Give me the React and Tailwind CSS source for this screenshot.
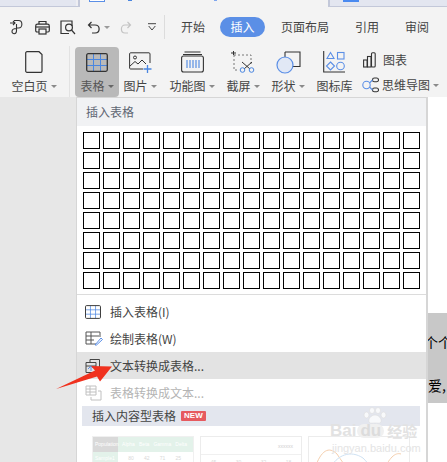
import React from "react";

const Caret = ({ c = "#8a8a8a" }) => (
  <span className="ml-[3px] inline-block h-0 w-0 border-x-[3px] border-t-[3px] border-x-transparent" style={{ borderTopColor: c }} />
);

const Big = ({ w, label, caret = true, active, children, className = "" }) => (
  <div className={`flex h-[50px] flex-col items-center rounded-[4px] pt-[3px] ${active ? "bg-[#b9b9b9]" : ""} ${className}`} style={{ width: w }}>
    <div className="flex h-[24px] items-center justify-center">{children}</div>
    <div className={`mt-[4px] flex items-center whitespace-nowrap text-[12px] leading-[16px] ${active ? "text-[#555]" : "text-[#444]"}`}>
      {label}{caret && <Caret c={active ? "#666" : "#8a8a8a"} />}
    </div>
  </div>
);

const TableIcon = ({ size = 22, h = 19 }) => (
  <svg width={size} height={h} viewBox="0 0 22 19" fill="none">
    <path d="M1 6.500H21M1 12.500H21M7.500 1V18M14.500 1V18" stroke="#4a86e0" strokeWidth="1" />
    <rect x="0.7" y="0.7" width="20.600" height="17.600" rx="1.500" stroke="#333" strokeWidth="1.300" />
  </svg>
);

const Row = ({ icon, label, hover, muted }) => (
  <div className={`flex h-[27px] items-center pl-[8px] ${hover ? "bg-[#e3e3e3]" : ""}`}>
    <div className="flex w-[25px] justify-start">{icon}</div>
    <span className={`text-[12px] leading-[16px] ${muted ? "text-[#b4b4b4]" : "text-[#444]"}`}>{label}</span>
  </div>
);

const rows = Array.from({ length: 8 });
const cols = Array.from({ length: 17 });
const latin = { fontFamily: '"Liberation Sans",sans-serif' };

export default function App() {
  return (
    <div className="relative flex h-[462px] w-[447px] flex-col overflow-hidden bg-[#f3f3f3]" style={{ fontFamily: '"Noto Sans CJK SC","Liberation Sans",sans-serif' }}>
      {/* window strip remnant */}
      <div className="flex h-[7px]">
        <div className="flex h-[7px] w-[80px] border-b border-r-2 border-[#c3c8d9] bg-[#eeeef2]">
          <div className="h-full w-[76px] bg-[#e3e6f0]" />
        </div>
        <div className="ml-[9px] h-[2px] w-[16px] border-x border-b border-[#5b8fe6] bg-white" />
        <div className="ml-[23px] h-[1px] w-[4px] bg-[#4a86e0]" />
        <div className="ml-[82px] h-[1px] w-[3px] bg-[#7fa6ee]" />
        <div className="ml-auto h-[7px] w-[119px] border-b border-l-2 border-[#c3c8d9] bg-[#e3e6f0] pl-[13px]">
          <div className="h-[2px] w-[16px] bg-[#4a8af0]" />
        </div>
      </div>

      {/* tabs row */}
      <div className="flex h-[40px] items-center pl-[10px]">
        <svg width="14" height="16" viewBox="0 0 14 16" fill="none" stroke="#333" strokeWidth="1.100">
          <path d="M0 4H5M3 2L5 4L3 6M4 1.500H8.500C13 1.500 13 9 8.500 9H6.500M6.500 5V12C6.500 15.500 2 15.500 2 12.500C2 10 5 9.500 6.500 9.500" />
        </svg>
        <svg className="ml-[11px]" width="15" height="15" viewBox="0 0 15 15" fill="none" stroke="#333" strokeWidth="1.200">
          <path d="M4 4V1.500H11V4M4 12H2C1 12 .7 11 .7 10.500V6C.7 5 1.500 4.200 2.500 4.200H12.500C13.500 4.200 14.300 5 14.300 6V10.500C14.300 11 14 12 13 12H11" />
          <rect x="4" y="9" width="7" height="5" />
          <path d="M1 7H14" />
        </svg>
        <svg className="ml-[10px]" width="16" height="15" viewBox="0 0 16 15" fill="none" stroke="#333" strokeWidth="1.200">
          <path d="M9 13.500H1V1H12V6" />
          <circle cx="9" cy="7.500" r="3.400" />
          <path d="M11.500 10L15 14" />
        </svg>
        <svg className="ml-[11px]" width="14" height="13" viewBox="0 0 14 13" fill="none" stroke="#333" strokeWidth="1.200">
          <path d="M4.500 1L1.500 4L4.500 7M1.500 4H8C13.500 4 13.500 12 8 12H5" />
        </svg>
        <Caret c="#9a9a9a" />
        <svg className="ml-[10px]" width="12" height="13" viewBox="0 0 12 13" fill="none" stroke="#c4c4c4" strokeWidth="1.200">
          <path d="M7.500 1L10.500 4L7.500 7M10.500 4H5C.2 4 .2 12 5 12H8" />
        </svg>
        <svg className="ml-[16px]" width="8" height="8" viewBox="0 0 8 8" fill="none" stroke="#444" strokeWidth="1">
          <path d="M0 .7H8M.7 3L4 7L7.300 3" />
        </svg>
        <div className="ml-[8px] h-[24px] w-px bg-[#dcdcdc]" />
        <div className="flex items-center text-[12px] leading-[18px] text-[#444]">
          <span className="ml-[16px]">开始</span>
          <span className="ml-[15px] flex h-[20px] w-[45px] items-center justify-center rounded-full bg-[#5b8fe6] text-white">插入</span>
          <span className="ml-[16px]">页面布局</span>
          <span className="ml-[26px]">引用</span>
          <span className="ml-[26px]">审阅</span>
        </div>
      </div>

      {/* ribbon */}
      <div className="flex h-[50px] items-start pl-[9px]">
        <Big w={50} label="空白页">
          <svg width="18" height="22" viewBox="0 0 18 22" fill="none" stroke="#333" strokeWidth="1.200"><path d="M2 .7H14L17 3.500V20C17 20.700 16.500 21.300 16 21.300H2C1.300 21.300 .7 20.700 .7 20V2C.7 1.300 1.300 .7 2 .7Z" /></svg>
        </Big>
        <div className="ml-[10px] mr-[5px] mt-[-1px] h-[52px] w-px bg-[#e2e2e2]" />
        <Big w={44} label="表格" active><TableIcon /></Big>
        <Big w={42} label="图片">
          <svg width="23" height="21" viewBox="0 0 23 21" fill="none" stroke="#333" strokeWidth="1"><path d="M14 17H1.500C1 17 .6 16.500 .6 16V2C.6 1.300 1 .8 1.500 .8H20C20.600 .8 21 1.300 21 2V11" /><path d="M1 14L6 9.500L9 12L13 8L17 12" /><circle cx="6" cy="5.500" r="1.500" /><path d="M18.500 13V21M14.500 17H22.500" stroke="#4a86e0" strokeWidth="1.300" /></svg>
        </Big>
        <Big w={62} label="功能图">
          <svg width="23" height="22" viewBox="0 0 23 22" fill="none" stroke="#333" strokeWidth="1.100"><path d="M3.500 1H19.500M2 3.500H21" /><rect x=".6" y="5" width="21.800" height="16" rx="2" /><path d="M6 9V17M9 9V17M12 9V17M15 9V17M18 9V17" stroke="#4a86e0" /></svg>
        </Big>
        <Big w={40} label="截屏">
          <svg width="24" height="22" viewBox="0 0 24 22" fill="none" stroke="#555" strokeWidth="1"><path d="M3 4H20V13M3 4V19H7" strokeDasharray="2 2" stroke="#777" /><path d="M0 2H5M2.500 0V4" stroke="#333" /><path d="M11 11L19 18M21 11L13 18" stroke="#333" /><circle cx="11.500" cy="19" r="2.300" stroke="#4a86e0" /><circle cx="20.500" cy="19" r="2.300" stroke="#4a86e0" /></svg>
        </Big>
        <Big w={50} label="形状">
          <svg width="25" height="23" viewBox="0 0 25 23" fill="none" stroke="#333" strokeWidth="1.100"><path d="M9 1H24V15.500H16" /><path d="M9 1V7" /><circle cx="9" cy="14" r="8" fill="#e1e8f5" stroke="#5b8fe6" strokeWidth="1.200" /></svg>
        </Big>
        <Big w={43} label="图标库" caret={false}>
          <svg width="23" height="22" viewBox="0 0 23 22" fill="none" stroke="#5b8fe6" strokeWidth="1.100"><path d="M.7 0V21H22" stroke="#333" /><path d="M7.500 1.500L11 7.500H4Z" /><rect x="14.500" y="1.500" width="6.500" height="6.500" /><path d="M7.500 11L11.500 15L7.500 19L3.500 15Z" /><circle cx="17.500" cy="15" r="3.800" /></svg>
        </Big>
        <div className="flex flex-col pl-[6px]">
          <div className="mt-[2px] flex h-[22px] items-center pl-[1px] text-[12px] leading-[16px] text-[#444]">
            <svg width="13" height="16" viewBox="0 0 13 16" fill="none" stroke="#333" strokeWidth="1.100"><rect x=".6" y="8" width="3.500" height="7" /><rect x="4.500" y="4.500" width="3.500" height="10.500" /><rect x="8.500" y=".8" width="3.700" height="14.200" rx="1" /></svg>
            <span className="ml-[7px]">图表</span>
          </div>
          <div className="mt-[2px] flex h-[24px] items-center whitespace-nowrap text-[12px] leading-[16px] text-[#444]">
            <svg width="17" height="16" viewBox="0 0 17 16" fill="none" stroke="#5b8fe6" strokeWidth="1.100"><circle cx="4.500" cy="8" r="3.700" /><rect x="10.500" y="1" width="6" height="3.800" rx="1.900" stroke="#333" /><rect x="10.500" y="11" width="6" height="3.800" rx="1.900" stroke="#333" /><path d="M7.500 6L10.500 3M7.500 10L10.500 13" /></svg>
            <span className="ml-[3px]">思维导图</span><Caret />
          </div>
        </div>
      </div>

      {/* page + dropdown */}
      <div className="flex min-h-0 flex-1">
        <div className="w-[76px] bg-[#e7e7e7]" />
        <div className="w-[352px] border-l border-r-2 border-t border-[#d6d6d6] bg-white">
          <div className="flex h-[28px] items-center bg-[#f1f2f4] pl-[9px] text-[12px] leading-[16px] text-[#5f6673]">插入表格</div>
          <div className="flex flex-col gap-[3px] pl-[6px] pt-[6px]">
            {rows.map((_, r) => (
              <div key={r} className="flex gap-[3px]">
                {cols.map((_, c) => <div key={c} className="h-[17px] w-[17px] border border-black bg-white" />)}
              </div>
            ))}
          </div>
          <div className="mt-[5px] h-px bg-[#dcdcdc]" />
          <div className="mt-[3px]">
            <Row label="插入表格(I)" icon={<TableIcon size={16} h={14} />} />
            <Row label="绘制表格(W)" icon={
              <svg width="18" height="15" viewBox="0 0 18 15" fill="none"><path d="M11 13H1V1H15V6M1 5H14M1 9H9M6 1V13" stroke="#555" /><path d="M10 14L16 7L17.500 8.500L11.500 14Z" stroke="#5b8fe6" /></svg>
            } />
            <Row hover label="文本转换成表格..." icon={
              <svg width="16" height="16" viewBox="0 0 16 16" fill="none"><path d="M5 4V1.500H14.500V12H12M1 4.500H11V14.500H1ZM1 8H11" stroke="#444" /><path d="M3 11L6 8L8 10M6 8V13" stroke="#5b8fe6" /></svg>
            } />
            <Row muted label="表格转换成文本..." icon={
              <svg width="17" height="16" viewBox="0 0 17 16" fill="none" stroke="#c0c0c0"><path d="M1 1H11V10H1ZM1 4H11M1 7H11M5 1V10M13 6H16V15H6V12" /></svg>
            } />
          </div>
          <div className="ml-[5px] mr-[6px] flex h-[20px] items-center bg-[#e3e6ee] pl-[10px] text-[12px] leading-[16px] text-[#444]">
            插入内容型表格
            <span className="ml-[5px] flex h-[10px] items-center rounded-[1px] bg-[#e65a5f] px-[3px] text-[8px] font-bold leading-none text-white" style={latin}>NEW</span>
          </div>
          {/* template previews */}
          <div className="ml-[15px] mt-[10px] flex gap-[6px] text-[5px] leading-none" style={latin}>
            <div className="flex h-[40px] w-[102px] flex-col border border-[#f0f0f0]">
              <div className="flex h-[15px] items-center justify-between bg-[#e3f2ea] pr-[6px] text-white">
                <span className="flex h-full w-[25px] items-center bg-[#d9d9d9] pl-[2px]">Population</span>
                <span>Alpha</span><span>Beta</span><span>Gamma</span><span>Delta</span>
              </div>
              <div className="flex h-[13px] items-center justify-between pr-[12px] text-[#d8d8d8]">
                <span className="flex h-full w-[25px] items-center bg-[#e3f2ea] pl-[2px] text-white">Sample1</span>
                <span>80</span><span>42</span><span>71</span><span>25</span>
              </div>
            </div>
            <div className="h-[40px] w-[102px] border border-[#ececec]">
              <div className="mr-[8px] mt-[7px] h-[8px] text-right text-[#cfcfcf]">xxxxxx</div>
              <div className="mt-[2px] h-px bg-[#f0f0f0]" />
              <div className="mt-[5px] flex justify-around text-[#d8d8d8]"><span>45</span><span>30</span><span>32</span><span>18</span></div>
            </div>
            <div className="h-[40px] w-[102px] border border-[#ececec]">
              <svg width="100" height="26" viewBox="0 0 100 26" fill="none" className="mt-[9px]">
                <path d="M6 22C12 4 20 0 28 8C32 14 36 20 40 24" stroke="#f5cfae" />
                <path d="M20 24C28 8 42 4 54 12C60 18 62 22 64 26" stroke="#cfe2f3" />
                <path d="M74 26C80 12 86 6 92 8" stroke="#f5cfae" />
              </svg>
            </div>
          </div>
        </div>
        <div className="flex-1 overflow-hidden bg-white pt-[216px]">
          <div className="h-[90px] overflow-hidden bg-[#c8c8c8] pt-[19px] text-[14px] leading-[20px] text-black" style={{ fontFamily: '"Noto Sans CJK SC",sans-serif' }}>
            <div className="ml-[-4px] whitespace-nowrap">个个</div>
            <div className="mt-[23px] whitespace-nowrap">爱,</div>
          </div>
        </div>
      </div>

      {/* red arrow annotation */}
      <svg className="absolute left-[50px] top-[360px]" width="62" height="30" viewBox="0 0 62 30" fill="#f0311e">
        <path d="M6 29L45 10.500L41 6L62 6.500L50 21.500L47 16.500Z" />
      </svg>
      {/* watermark */}
      <div className="pointer-events-none absolute left-[330px] top-[407px] flex w-[92px] flex-col items-start">
        <svg className="ml-[33px]" width="24" height="17" viewBox="0 0 24 17" fill="#ffffff" fillOpacity="0.75" stroke="#dedede" strokeWidth="0.600">
          <ellipse cx="3.500" cy="8" rx="2.500" ry="3" />
          <ellipse cx="9" cy="3.500" rx="2.500" ry="3" />
          <ellipse cx="15" cy="3.500" rx="2.500" ry="3" />
          <ellipse cx="20.500" cy="8" rx="2.500" ry="3" />
          <path d="M12 8C8 8 5 12 6 15C7 17 10 16 12 16C14 16 17 17 18 15C19 12 16 8 12 8Z" />
        </svg>
        <div className="flex items-center whitespace-nowrap text-[17px] font-bold leading-[14px] text-[#e2e2e2]" style={latin}>
          Bai<span className="mx-[1px] rounded-full bg-[#f0f0f0] px-[3px] text-[#dcdcdc]">du</span><span className="ml-[2px] text-[15px]" style={{ fontFamily: '"Noto Sans CJK SC",sans-serif' }}>经验</span>
        </div>
        <div className="ml-[2px] mt-[4px] text-[11px] leading-[12px] text-[#e4e4e4]" style={latin}>jingyan.baidu.com</div>
      </div>
    </div>
  );
}
